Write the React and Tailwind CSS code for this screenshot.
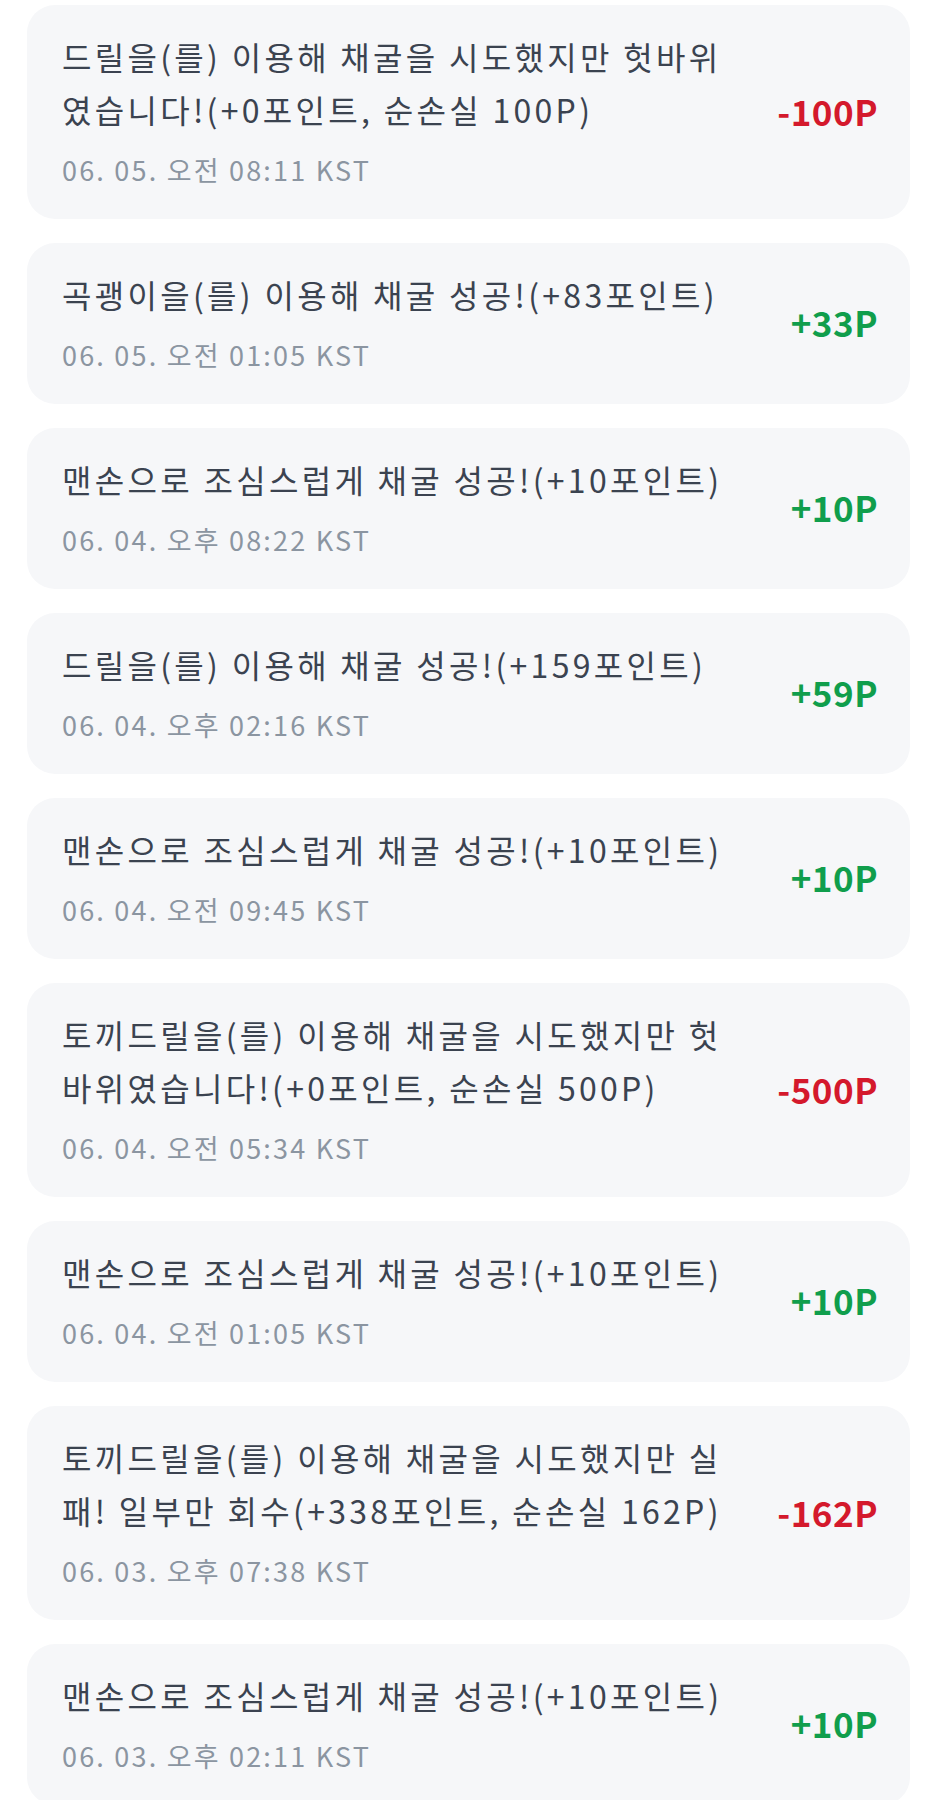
import React from "react";

const items = [
  { title: "드릴을(를) 이용해 채굴을 시도했지만 헛바위였습니다!(+0포인트, 순손실 100P)", date: "06. 05. 오전 08:11 KST", amount: "-100P", neg: true },
  { title: "곡괭이을(를) 이용해 채굴 성공!(+83포인트)", date: "06. 05. 오전 01:05 KST", amount: "+33P", neg: false },
  { title: "맨손으로 조심스럽게 채굴 성공!(+10포인트)", date: "06. 04. 오후 08:22 KST", amount: "+10P", neg: false },
  { title: "드릴을(를) 이용해 채굴 성공!(+159포인트)", date: "06. 04. 오후 02:16 KST", amount: "+59P", neg: false },
  { title: "맨손으로 조심스럽게 채굴 성공!(+10포인트)", date: "06. 04. 오전 09:45 KST", amount: "+10P", neg: false },
  { title: "토끼드릴을(를) 이용해 채굴을 시도했지만 헛바위였습니다!(+0포인트, 순손실 500P)", date: "06. 04. 오전 05:34 KST", amount: "-500P", neg: true },
  { title: "맨손으로 조심스럽게 채굴 성공!(+10포인트)", date: "06. 04. 오전 01:05 KST", amount: "+10P", neg: false },
  { title: "토끼드릴을(를) 이용해 채굴을 시도했지만 실패! 일부만 회수(+338포인트, 순손실 162P)", date: "06. 03. 오후 07:38 KST", amount: "-162P", neg: true },
  { title: "맨손으로 조심스럽게 채굴 성공!(+10포인트)", date: "06. 03. 오후 02:11 KST", amount: "+10P", neg: false },
];

export default function App() {
  return (
    <div
      className="w-[939px] h-[1800px] overflow-hidden bg-white pt-[5px] pl-[27px] pr-[29px] flex flex-col gap-[24px]"
      style={{ fontFamily: '"Noto Sans CJK KR", "Noto Sans", sans-serif' }}
    >
      {items.map((it, i) => (
        <div
          key={i}
          className="shrink-0 bg-[#f6f7f9] rounded-[28px] pl-[35px] pr-[32px] pt-[25px] pb-[29px] flex items-center gap-[30px]"
        >
          <div className="flex-1 min-w-0">
            <div className="text-[32px] leading-[53px] tracking-[3.3px] text-[#3b4350]">{it.title}</div>
            <div className="mt-[14px] text-[27px] leading-[40px] tracking-[2.2px] text-[#8b95a1]">{it.date}</div>
          </div>
          <div
            className={
              "shrink-0 text-[35px] font-bold leading-none tracking-[0.5px] " +
              (it.neg ? "text-[#d4192c]" : "text-[#109e4c]")
            }
          >
            {it.amount}
          </div>
        </div>
      ))}
    </div>
  );
}
